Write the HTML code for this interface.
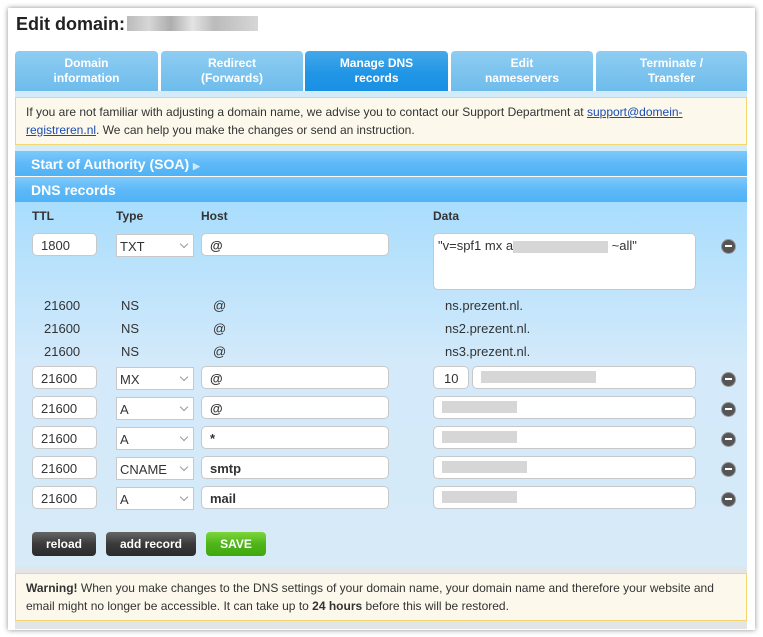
<!DOCTYPE html>
<html><head><style>
*{box-sizing:border-box;margin:0;padding:0}
body{width:763px;height:637px;background:#fff;font-family:"Liberation Sans",Arial,sans-serif;font-size:12px;color:#333;position:relative;overflow:hidden}
.panel{position:absolute;left:8px;top:8px;width:747px;height:622px;background:#fff;box-shadow:0 0 5px rgba(0,0,0,.45)}
.a{position:absolute}
h1{position:absolute;left:16px;top:14px;font-size:18px;font-weight:bold;color:#222}
.blur{position:absolute;background:linear-gradient(90deg,#aaa,#ccc,#999,#ddd,#aaa,#bbb,#ccc);opacity:.8}
.tab{position:absolute;top:51px;height:40px;border-radius:4px 4px 0 0;background:linear-gradient(#8fcdf2,#7cc3ee 55%,#6ebcec);color:#fff;font-weight:bold;text-align:center;font-size:12px;line-height:15px;padding-top:5px}
.tab.on{background:linear-gradient(#45a8e8,#2196e6 55%,#1a90e4)}
.note{position:absolute;left:15px;width:732px;background:#fcf8ec;border:1px solid #f3d76c;padding:5px 10px;line-height:18px;font-size:12px}
.note a{color:#1a4bb3}
.bar{position:absolute;left:15px;width:732px;height:25px;background:linear-gradient(#7ec9fb,#5eb9f7 50%,#4fb2f6);color:#fff;font-weight:bold;font-size:14px;padding:5px 0 0 16px}
.in{position:absolute;height:23px;background:#fff;border:1px solid #c8c8c8;border-radius:5px;padding:4px 0 0 8px;font-size:13px}
.sel{position:absolute;height:23px;background:#fff;border:1px solid #c8c8c8;padding:4px 0 0 3px;font-size:13px}
.sel:after{content:"";position:absolute;right:6px;top:6px;width:5px;height:5px;border-right:1px solid #999;border-bottom:1px solid #999;transform:rotate(45deg)}
.t{position:absolute;font-size:13px}
.min{position:absolute;left:722px;width:13px;height:13px;border-radius:50%;background:#555;box-shadow:0 0 0 1px #999}
.min:after{content:"";position:absolute;left:3px;top:5px;width:7px;height:2px;background:#fff}
.btn{position:absolute;top:532px;height:24px;border-radius:4px;color:#fff;font-weight:bold;text-align:center;padding-top:5px;font-size:12px;background:linear-gradient(#666,#3a3a3a 50%,#2b2b2b)}
</style></head><body>
<div class="panel"></div>
<h1>Edit domain:</h1>
<div class="blur" style="left:127px;top:16px;width:131px;height:15px"></div>
<div class="tab" style="left:15px;width:143px">Domain<br>information</div>
<div class="tab" style="left:161px;width:142px">Redirect<br>(Forwards)</div>
<div class="tab on" style="left:305px;width:143px">Manage DNS<br>records</div>
<div class="tab" style="left:451px;width:142px">Edit<br>nameservers</div>
<div class="tab" style="left:596px;width:151px">Terminate /<br>Transfer</div>
<div class="a" style="left:15px;top:91px;width:732px;height:60px;background:#d4ecfa"></div>
<div class="note" style="top:97px;height:48px">If you are not familiar with adjusting a domain name, we advise you to contact our Support Department at <a href="#">support@domein-registreren.nl</a>. We can help you make the changes or send an instruction.</div>
<div class="bar" style="top:151px">Start of Authority (SOA) <span style="color:#cfe9fb;font-size:9px">&#9654;</span></div>
<div class="bar" style="top:177px">DNS records</div>
<div class="a" style="left:15px;top:202px;width:732px;height:366px;background:linear-gradient(#a9ddfd,#d4eafa 45%,#d6eaf8)"></div>
<div class="t" style="left:32px;top:209px;font-weight:bold;font-size:12px">TTL</div>
<div class="t" style="left:116px;top:209px;font-weight:bold;font-size:12px">Type</div>
<div class="t" style="left:201px;top:209px;font-weight:bold;font-size:12px">Host</div>
<div class="t" style="left:433px;top:209px;font-weight:bold;font-size:12px">Data</div>

<div class="in" style="left:32px;top:233px;width:65px">1800</div>
<div class="sel" style="left:116px;top:234px;width:78px">TXT</div>
<div class="in" style="left:201px;top:233px;width:188px;font-weight:bold">@</div>
<div class="in" style="left:433px;top:233px;width:263px;height:57px;padding-left:4px">"v=spf1 mx a<span style="display:inline-block;width:95px;height:12px;background:#d6d6d6;vertical-align:middle"></span> ~all"</div>
<div class="min" style="top:240px"></div>

<div class="t" style="left:44px;top:298px">21600</div><div class="t" style="left:121px;top:298px">NS</div><div class="t" style="left:213px;top:298px">@</div><div class="t" style="left:445px;top:298px">ns.prezent.nl.</div>
<div class="t" style="left:44px;top:321px">21600</div><div class="t" style="left:121px;top:321px">NS</div><div class="t" style="left:213px;top:321px">@</div><div class="t" style="left:445px;top:321px">ns2.prezent.nl.</div>
<div class="t" style="left:44px;top:344px">21600</div><div class="t" style="left:121px;top:344px">NS</div><div class="t" style="left:213px;top:344px">@</div><div class="t" style="left:445px;top:344px">ns3.prezent.nl.</div>

<div class="in" style="left:32px;top:366px;width:65px">21600</div>
<div class="sel" style="left:116px;top:367px;width:78px">MX</div>
<div class="in" style="left:201px;top:366px;width:188px;font-weight:bold">@</div>
<div class="in" style="left:433px;top:366px;width:36px;padding-left:10px">10</div>
<div class="in" style="left:472px;top:366px;width:224px"><span style="display:inline-block;width:115px;height:12px;background:#d6d6d6"></span></div>
<div class="min" style="top:373px"></div>

<div class="in" style="left:32px;top:396px;width:65px">21600</div>
<div class="sel" style="left:116px;top:397px;width:78px">A</div>
<div class="in" style="left:201px;top:396px;width:188px;font-weight:bold">@</div>
<div class="in" style="left:433px;top:396px;width:263px"><span style="display:inline-block;width:75px;height:12px;background:#d6d6d6"></span></div>
<div class="min" style="top:403px"></div>

<div class="in" style="left:32px;top:426px;width:65px">21600</div>
<div class="sel" style="left:116px;top:427px;width:78px">A</div>
<div class="in" style="left:201px;top:426px;width:188px;font-weight:bold">*</div>
<div class="in" style="left:433px;top:426px;width:263px"><span style="display:inline-block;width:75px;height:12px;background:#d6d6d6"></span></div>
<div class="min" style="top:433px"></div>

<div class="in" style="left:32px;top:456px;width:65px">21600</div>
<div class="sel" style="left:116px;top:457px;width:78px">CNAME</div>
<div class="in" style="left:201px;top:456px;width:188px;font-weight:bold">smtp</div>
<div class="in" style="left:433px;top:456px;width:263px"><span style="display:inline-block;width:85px;height:12px;background:#d6d6d6"></span></div>
<div class="min" style="top:463px"></div>

<div class="in" style="left:32px;top:486px;width:65px">21600</div>
<div class="sel" style="left:116px;top:487px;width:78px">A</div>
<div class="in" style="left:201px;top:486px;width:188px;font-weight:bold">mail</div>
<div class="in" style="left:433px;top:486px;width:263px"><span style="display:inline-block;width:75px;height:12px;background:#d6d6d6"></span></div>
<div class="min" style="top:493px"></div>

<div class="btn" style="left:32px;width:64px">reload</div>
<div class="btn" style="left:106px;width:90px">add record</div>
<div class="btn" style="left:206px;width:60px;background:linear-gradient(#7cd63a,#4fb51a 50%,#3fa80e)">SAVE</div>

<div class="a" style="left:15px;top:567px;width:732px;height:62px;background:#e2e4e6"></div>
<div class="note" style="top:573px;height:48px"><b>Warning!</b> When you make changes to the DNS settings of your domain name, your domain name and therefore your website and email might no longer be accessible. It can take up to <b>24 hours</b> before this will be restored.</div>
</body></html>
